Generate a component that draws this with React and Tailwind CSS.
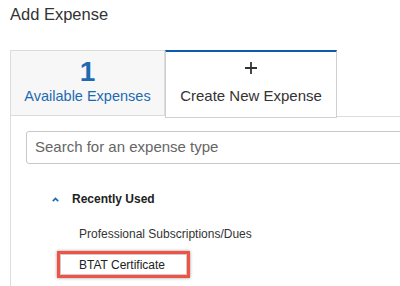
export default function App() {
  return (
    <div
      className="w-[400px] h-[286px] bg-white overflow-hidden flex flex-col"
      style={{ fontFamily: '"Liberation Sans", Arial, sans-serif' }}
    >
      <div className="h-[50px] pl-[10px] pt-[4px] text-[16.5px] leading-[20px] text-[#333]">
        Add Expense
      </div>
      <div className="flex items-start pl-[10px] h-[68px]">
        <div className="w-[155px] h-[68px] border-l border-[#ddd]">
          <div className="h-[66px] bg-[#f7f7f7] border-t border-r border-b border-[#dcdcdc] flex flex-col items-center">
            <div className="mt-[6px] text-[28px] leading-[30px] font-bold text-[#1d6ab3]">1</div>
            <div className="text-[14.5px] leading-[18px] text-[#1d6ab3]">Available Expenses</div>
          </div>
        </div>
        <div className="w-[172px] h-[68px] bg-white border-t-2 border-t-[#0b5cad] border-l border-r border-b border-[#d0d0d0] flex flex-col items-center">
          <svg width="14" height="14" viewBox="0 0 14 14" className="mt-[9px]">
            <path d="M7 1v12M1 7h12" stroke="#333" strokeWidth="1.8" />
          </svg>
          <div className="mt-[12px] text-[15px] leading-[18px] text-[#333]">Create New Expense</div>
        </div>
        <div className="flex-1 h-[67px] border-b border-[#dcdcdc]" />
      </div>
      <div className="flex-1 ml-[10px] border-l border-[#ddd] pl-[15px] pt-[13px] flex flex-col">
        <div className="w-[420px] h-[33px] shrink-0 border border-[#c8c8c8] rounded-[3px] flex items-center px-[8px] text-[15px] text-[#666]">
          Search for an expense type
        </div>
        <div className="flex items-center mt-[26px] h-[18px] shrink-0">
          <svg width="7" height="5" viewBox="0 0 7 5" className="ml-[26px]">
            <path d="M0.8 4.2L3.5 1.4L6.2 4.2" stroke="#1d6ab3" strokeWidth="1.7" fill="none" />
          </svg>
          <span className="ml-[13px] text-[12px] font-bold text-[#222]">Recently Used</span>
        </div>
        <div className="mt-[17px] pl-[53px] text-[12px] leading-[18px] text-[#333] shrink-0">
          Professional Subscriptions/Dues
        </div>
        <div className="mt-[8px] ml-[31px] w-[133px] h-[27px] shrink-0 border-[3px] border-[#ee5345] shadow-[0_0_3px_rgba(0,0,0,0.4)] flex items-center">
          <div className="flex-1 h-full border border-[#ccc] flex items-center pl-[18px] text-[12px] text-[#222]">
            BTAT Certificate
          </div>
        </div>
      </div>
    </div>
  );
}
